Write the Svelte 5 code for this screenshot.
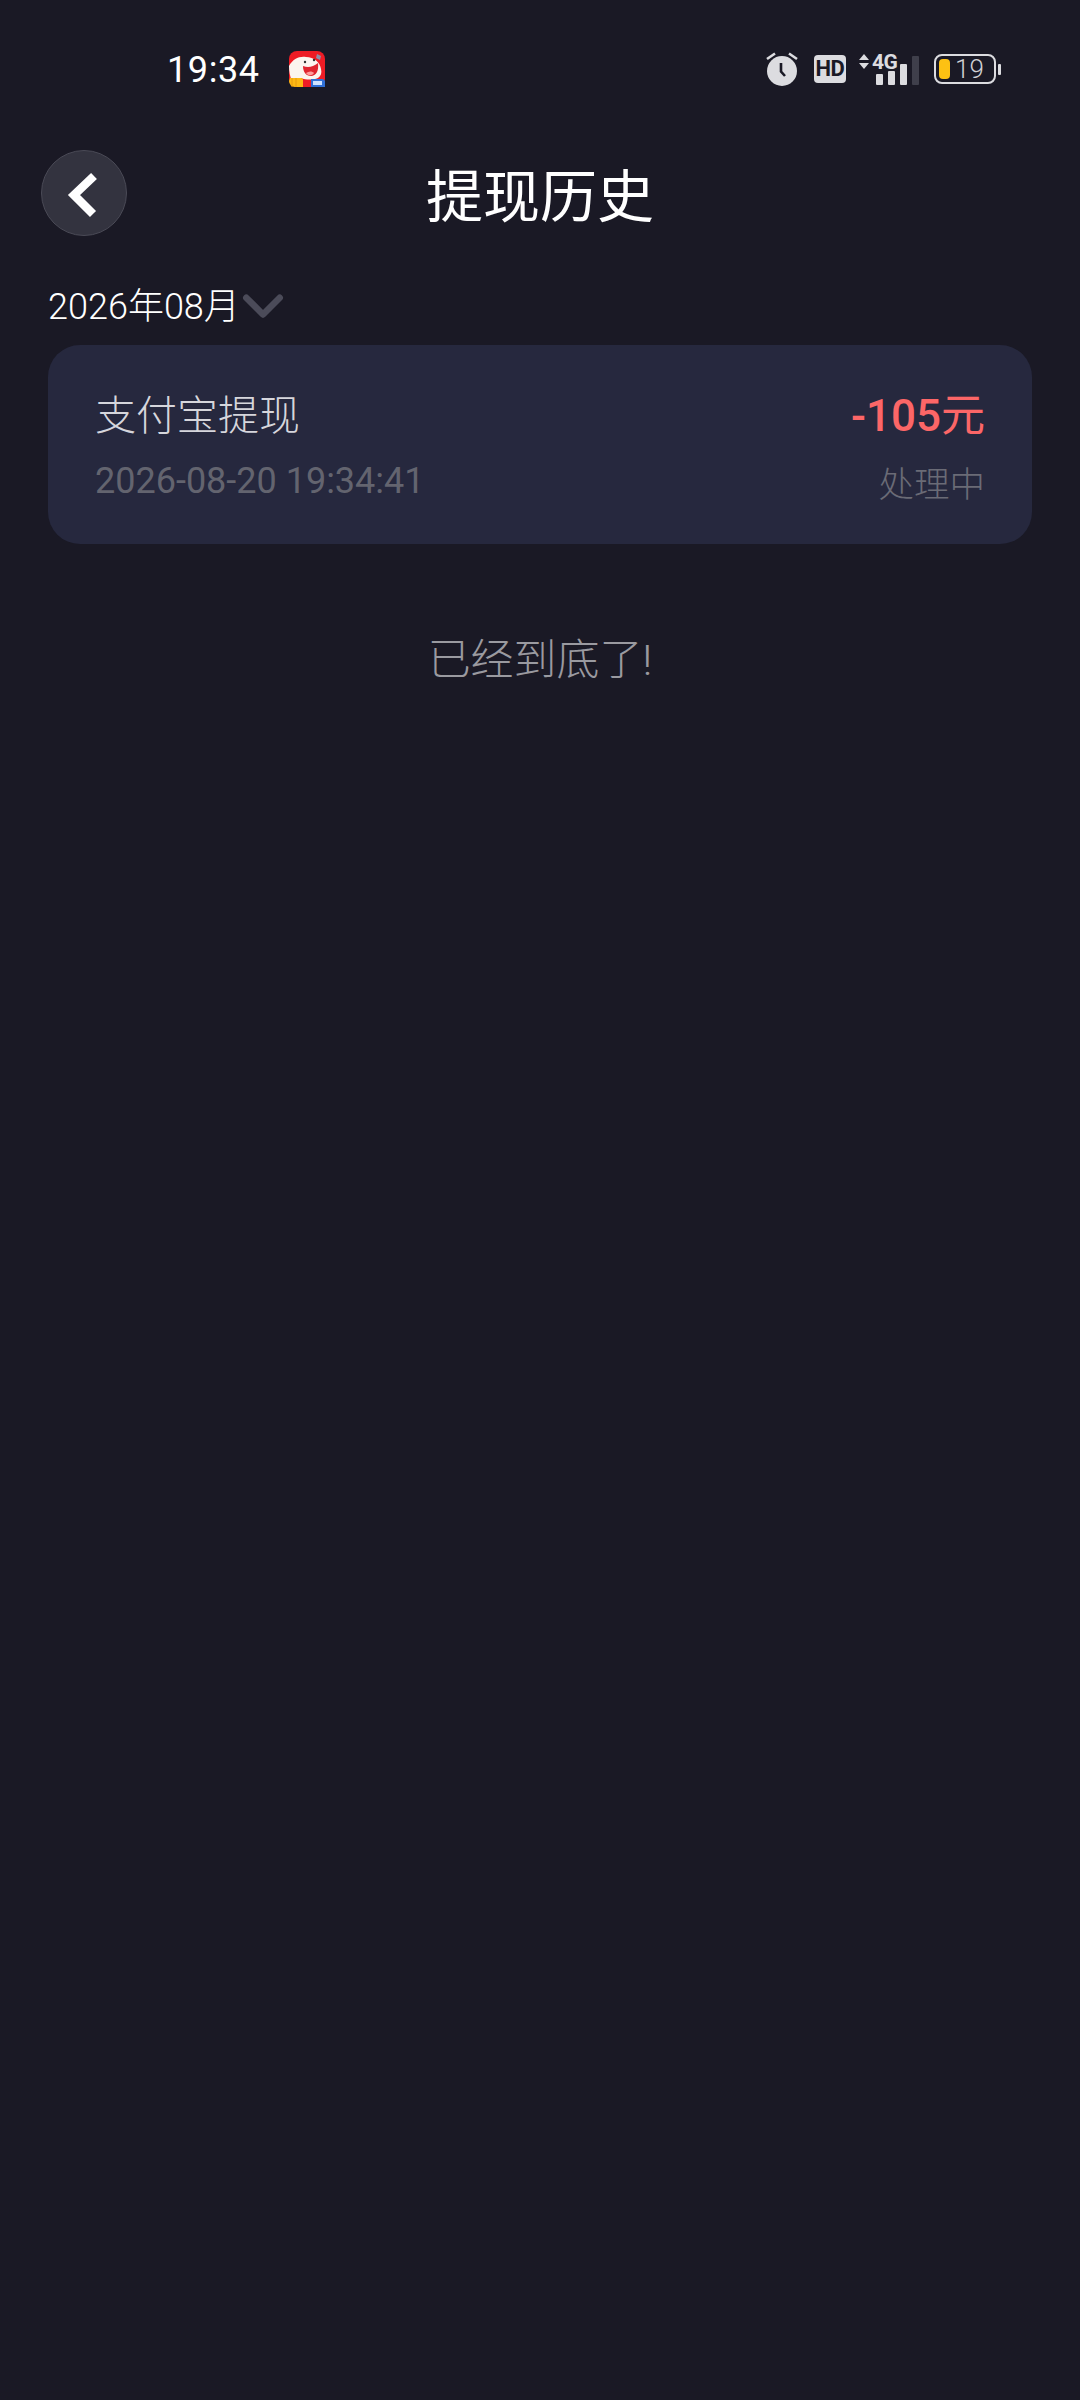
<script>
  const bars = [
    { x: 18, h: 11, c: '#dcdce0' },
    { x: 30, h: 14, c: '#dcdce0' },
    { x: 42, h: 21, c: '#dcdce0' },
    { x: 54, h: 29, c: '#3f3f4b' }
  ];
</script>

<div class="page">
  <div class="status">
    <div class="status-left">
      <span class="clock">19:34</span>
      <svg class="app" viewBox="0 0 36 36" width="36" height="36" aria-hidden="true">
        <rect width="36" height="36" rx="8" fill="#ee1c25" />
        <path d="M0 15C4 8 10 5 17 6c8 0 14 5 15 12 1 4 0 7-3 9-5 2-12 2-17 0-2 0-3 1-4 3H3C1 26 0 20 0 15z" fill="#fbf5ef" />
        <path d="M14 15c5 2 10 1 15-3 1 8-2 13-7 13s-8-4-8-10z" fill="#e0252e" />
        <path d="M17 22c3-2 6-2 8 0-2 3-6 3-8 0z" fill="#ff9c9c" />
        <circle cx="16" cy="11" r="1.2" fill="#333" />
        <circle cx="25" cy="9" r="1.2" fill="#333" />
        <path d="M28 3l4 2-1 4-4-2z" fill="#8b8fa8" />
        <path d="M1 27h11a2 2 0 0 1 2 2v7H6a6 6 0 0 1-6-6z" fill="#fdb813" />
        <path d="M3 27v9M7 27v9" stroke="#e89a10" stroke-width="1" />
        <path d="M22 28h11a3 3 0 0 1 3 2v6H22z" fill="#2f6fd6" />
        <rect x="24" y="30" width="9" height="4" fill="#cfe2ff" />
      </svg>
    </div>
    <div class="status-right">
      <svg viewBox="0 0 34 34" width="34" height="34" aria-hidden="true">
        <circle cx="17" cy="19" r="15" fill="#dcdce0" />
        <path d="M16 11v8.5l4 4.5" fill="none" stroke="#1a1925" stroke-width="2.6" />
        <path d="M2 7l8-5.5M32 7l-8-5.5" stroke="#dcdce0" stroke-width="2.6" />
      </svg>
      <span class="hd">HD</span>
      <svg class="signal" viewBox="0 -8 62 40" width="62" height="40" aria-hidden="true">
        <path d="M1 7l5-6 5 6zM1 10h10l-5 6z" fill="#dcdce0" />
        <text x="14" y="16" class="four-g">4G</text>
        {#each bars as b}
          <rect x={b.x} y={32 - b.h} width="7" height={b.h} rx="1" fill={b.c} />
        {/each}
      </svg>
      <div class="battery">
        <div class="shell">
          <span class="level"></span>
          <span class="pct">19</span>
        </div>
        <span class="nub"></span>
      </div>
    </div>
  </div>

  <header class="nav">
    <button class="back" aria-label="返回">
      <svg viewBox="0 0 84 84" width="84" height="84" aria-hidden="true">
        <path d="M52 25L32 44l19 19" fill="none" stroke="#fff" stroke-width="8.5" />
      </svg>
    </button>
    <h1>提现历史</h1>
  </header>

  <div class="month">
    <span>2026年08月</span>
    <svg viewBox="0 0 44 28" width="42" height="26" aria-hidden="true">
      <path d="M4 4l18 18L40 4" fill="none" stroke="#4b4b59" stroke-width="7" stroke-linecap="round" stroke-linejoin="round" />
    </svg>
  </div>

  <section class="card">
    <div class="col">
      <div class="name">支付宝提现</div>
      <div class="date">2026-08-20 19:34:41</div>
    </div>
    <div class="col right">
      <div class="amount">-105<span class="unit">元</span></div>
      <div class="state">处理中</div>
    </div>
  </section>

  <p class="end">已经到底了!</p>
</div>

<style>
  :global(body) {
    margin: 0;
    background: #1a1925;
  }
  .page {
    width: 1080px;
    height: 2400px;
    background: #1a1925;
    font-family: Roboto, "Noto Sans CJK SC", sans-serif;
    overflow: hidden;
  }
  .status {
    height: 138px;
    box-sizing: border-box;
    padding: 52px 79px 0 167px;
    display: flex;
    justify-content: space-between;
    align-items: flex-start;
  }
  .status-left {
    display: flex;
    align-items: center;
    gap: 29px;
  }
  .app {
    margin-top: -2px;
  }
  .clock {
    font-size: 36px;
    line-height: 36px;
    font-weight: 400;
    color: #fff;
    letter-spacing: 0.6px;
  }
  .status-right {
    display: flex;
    align-items: center;
    color: #dcdce0;
  }
  .hd {
    width: 32px;
    height: 28px;
    margin-left: 15px;
    border-radius: 4px;
    background: #dcdce0;
    color: #1a1925;
    font-family: "Liberation Sans Narrow", Roboto, sans-serif;
    font-size: 22px;
    font-weight: 700;
    line-height: 28px;
    text-align: center;
    letter-spacing: -0.5px;
  }
  .signal {
    margin: -8px 0 0 12px;
  }
  .four-g {
    font-family: "Liberation Sans Narrow", Roboto, sans-serif;
    font-weight: 700;
    font-size: 21px;
    fill: #dcdce0;
    letter-spacing: -0.5px;
  }
  .battery {
    display: flex;
    align-items: center;
    gap: 2px;
    margin-left: 14px;
  }
  .shell {
    width: 62px;
    height: 30px;
    box-sizing: border-box;
    border: 2px solid #dcdce0;
    border-radius: 8px;
    padding: 3px;
    display: flex;
    align-items: stretch;
    gap: 5px;
  }
  .level {
    width: 11px;
    background: #fdc113;
    border-radius: 4px;
  }
  .pct {
    font-size: 26px;
    line-height: 20px;
    color: #d0d0d4;
    font-weight: 300;
  }
  .nub {
    width: 3px;
    height: 11px;
    background: #dcdce0;
    border-radius: 1px;
  }
  .nav {
    position: relative;
    height: 112px;
    display: flex;
    align-items: center;
    justify-content: center;
    margin-top: 4px;
  }
  .back {
    position: absolute;
    left: 41px;
    top: 8px;
    width: 86px;
    height: 86px;
    box-sizing: border-box;
    border-radius: 50%;
    background: #33333f;
    border: 1px solid #4a4a56;
    padding: 0;
  }
  .back svg {
    display: block;
  }
  h1 {
    margin: 0;
    font-size: 57px;
    line-height: 60px;
    font-weight: 400;
    color: #fff;
  }
  .month {
    display: flex;
    align-items: center;
    gap: 2px;
    margin: 33px 0 0 48px;
    height: 40px;
    color: #fff;
    font-size: 36px;
    line-height: 40px;
    font-weight: 300;
  }
  .card {
    margin: 18px 48px 0;
    height: 199px;
    box-sizing: border-box;
    padding: 49px 47px 0;
    background: #26283e;
    border-radius: 32px;
    display: flex;
    justify-content: space-between;
  }
  .col {
    display: flex;
    flex-direction: column;
  }
  .right {
    align-items: flex-end;
  }
  .name {
    font-size: 41px;
    line-height: 44px;
    color: #d6d6dc;
    font-weight: 300;
  }
  .date {
    margin-top: 23px;
    font-size: 36px;
    line-height: 40px;
    color: #63646f;
  }
  .amount {
    font-size: 44px;
    line-height: 44px;
    font-weight: 500;
    color: #fc6667;
  }
  .unit {
    font-weight: 400;
  }
  .state {
    margin-top: 25px;
    font-size: 35.5px;
    line-height: 44px;
    color: #6a6b76;
    font-weight: 300;
  }
  .end {
    margin: 91px 0 0;
    text-align: center;
    font-size: 43px;
    line-height: 50px;
    color: #9a9aa0;
    font-weight: 300;
  }
</style>
